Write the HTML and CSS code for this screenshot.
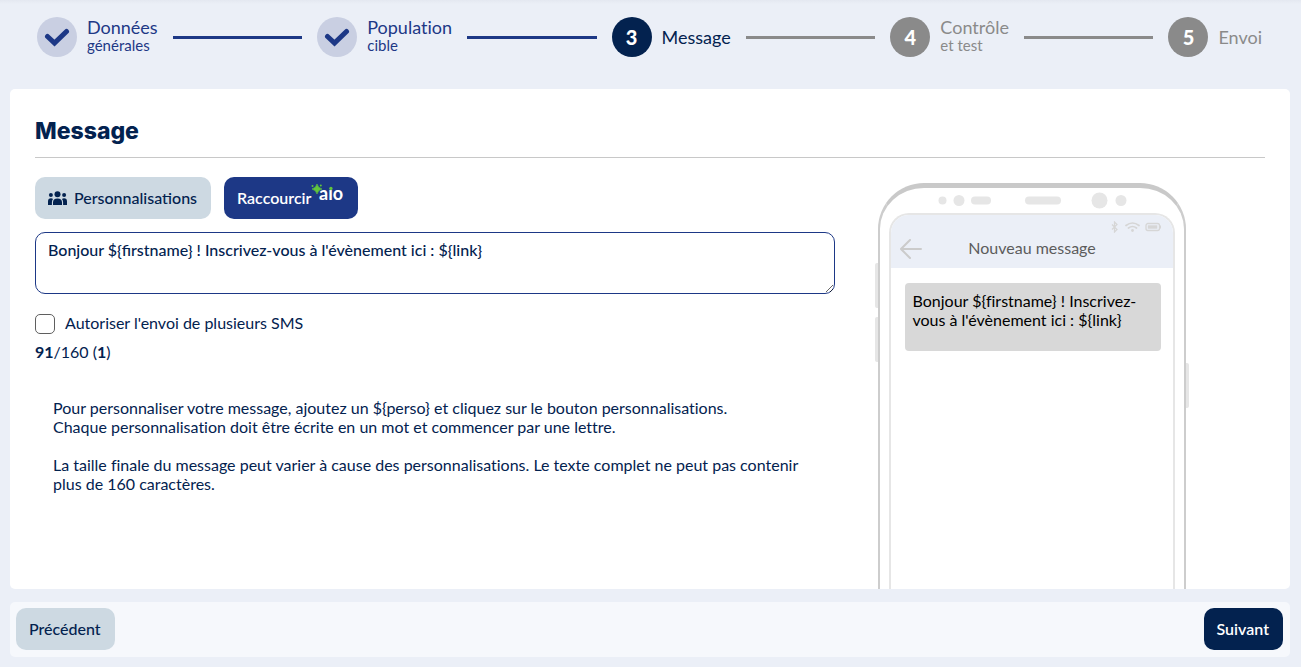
FILE: index.html
```html
<!DOCTYPE html>
<html lang="fr">
<head>
  <meta charset="UTF-8">
  <title>Message</title>
  <meta name="viewport" content="width=device-width, initial-scale=1.0">
  <link rel="stylesheet" href="styles.css">
</head>
<body>

<ol class="steps">
  <li class="step done">
    <span class="circle">
      <svg width="26" height="20" viewBox="0 0 26 20"><path d="M3.5 9.5l7 6.5L22.500 4.500" fill="none" stroke="currentColor" stroke-width="5" stroke-linecap="round" stroke-linejoin="miter"/></svg>
    </span>
    <span class="label">Données <small>générales</small></span>
  </li>
  <li class="line done"></li>
  <li class="step done">
    <span class="circle">
      <svg width="26" height="20" viewBox="0 0 26 20"><path d="M3.5 9.5l7 6.5L22.500 4.500" fill="none" stroke="currentColor" stroke-width="5" stroke-linecap="round" stroke-linejoin="miter"/></svg>
    </span>
    <span class="label">Population <small>cible</small></span>
  </li>
  <li class="line done"></li>
  <li class="step current">
    <span class="circle">3</span>
    <span class="label">Message</span>
  </li>
  <li class="line"></li>
  <li class="step">
    <span class="circle">4</span>
    <span class="label">Contrôle <small>et test</small></span>
  </li>
  <li class="line"></li>
  <li class="step">
    <span class="circle">5</span>
    <span class="label">Envoi</span>
  </li>
</ol>

<main class="card">
  <h1>Message</h1>
  <div class="columns">

    <form class="editor" id="smsForm">
      <div class="tools">
        <button type="button" class="btn btn-light">
          <svg width="19" height="14" viewBox="0 0 19 14" fill="currentColor">
            <circle cx="9.500" cy="3.200" r="3"/><circle cx="2.900" cy="4" r="2"/><circle cx="16.100" cy="4" r="2"/>
            <path d="M5 14v-2.500Q5 7.500 9.500 7.500T14 11.500V14zM0 14v-3.500Q0 7.300 3 7.300q1.200 0 2 .6Q3.900 9.300 3.900 11.500V14zM19 14v-3.500Q19 7.300 16 7.300q-1.200 0-2 .6 1.100 1.400 1.100 3.600V14z"/>
          </svg>
          <span>Personnalisations</span>
        </button>
        <button type="button" class="btn btn-blue">
          <span>Raccourcir</span>
          <svg class="aio" width="33" height="24" viewBox="0 0 33 24">
            <text x="8" y="18" class="aio-text">aio</text>
            <rect x="17" y="2" width="6" height="6" fill="#1d3886"/>
            <circle cx="19.900" cy="6.500" r="1.700" fill="#62c63c"/>
            <path d="M6 2Q7 6 11 7 7 8 6 12 5 8 1 7 5 6 6 2z" fill="#62c63c" stroke="#62c63c" stroke-width=".6"/>
            <circle cx="1.500" cy="4" r="1" fill="#62c63c"/><circle cx="9.800" cy="3.500" r="1" fill="#62c63c"/>
          </svg>
        </button>
      </div>
      <textarea name="message" aria-label="Message">Bonjour ${firstname} ! Inscrivez-vous à l'évènement ici : ${link}</textarea>
      <label class="check"><input type="checkbox" name="multiple"> <span>Autoriser l'envoi de plusieurs SMS</span></label>
      <p class="count"><b>91</b>/160 (<b>1</b>)</p>
      <div class="help">
        <p>Pour personnaliser votre message, ajoutez un ${perso} et cliquez sur le bouton personnalisations.<br>
        Chaque personnalisation doit être écrite en un mot et commencer par une lettre.</p>
        <p>La taille finale du message peut varier à cause des personnalisations. Le texte complet ne peut pas contenir plus de 160 caractères.</p>
      </div>
    </form>

    <div class="phone">
      <span class="key key-up"></span>
      <span class="key key-down"></span>
      <span class="key key-power"></span>
      <svg class="sensors" width="286" height="25" viewBox="0 0 286 25" fill="#e6e6e6">
        <circle cx="53.500" cy="12.500" r="4"/>
        <circle cx="70" cy="12.500" r="5.500"/>
        <rect x="82" y="8.500" width="20" height="8" rx="4"/>
        <rect x="136" y="8.500" width="36" height="8" rx="4"/>
        <circle cx="210.500" cy="12.500" r="8"/>
        <circle cx="232" cy="12.500" r="5.500"/>
      </svg>
      <div class="screen">
        <div class="topbar">
          <svg class="status" width="50" height="12" viewBox="0 0 50 12" fill="none" stroke="#d6d6d6">
            <path d="M1 3.500l5 5L3.500 11V1L6 3.500l-5 5" stroke-width="1.200"/>
            <path d="M15 4.500q6.500-5 13 0M17.500 7q4-3 8 0" stroke-width="1.700" stroke-linecap="round"/>
            <circle cx="21.500" cy="9.500" r="1.400" fill="#d6d6d6" stroke="none"/>
            <rect x="35" y="2.500" width="13.500" height="7" rx="2" stroke-width="1.300"/>
            <rect x="36.800" y="4.300" width="9.500" height="3.400" fill="#d6d6d6" stroke="none"/>
            <path d="M49.500 4.500v3"/>
          </svg>
          <div class="topbar-title">
            <svg class="back" width="22" height="20" viewBox="0 0 22 20" fill="none" stroke="#cbcbcb" stroke-width="2" stroke-linecap="round"><path d="M10 1L1 10l9 9M1 10h20"/></svg>
            <span>Nouveau message</span>
          </div>
        </div>
        <p class="bubble">Bonjour ${firstname} ! Inscrivez-vous à l'évènement ici : ${link}</p>
      </div>
    </div>

  </div>
</main>

<footer class="actions">
  <button type="button" class="btn btn-light"><span>Précédent</span></button>
  <button type="submit" form="smsForm" class="btn btn-navy"><span>Suivant</span></button>
</footer>

</body>
</html>
```
FILE: styles.css
```css
* { box-sizing: border-box; }
body {
  margin: 0; padding: 0 11px 10px 10px; min-height: 100vh;
  display: flex; flex-direction: column;
  font-family: Lato, sans-serif; font-size: 16px; line-height: 19px;
  font-variant-ligatures: none;
  background: linear-gradient(#e4e8f1, #ebeff7 4px) #ebeff7; color: #03224f;
}
p { margin: 0; }

.steps {
  display: flex; align-items: center; list-style: none;
  margin: 0; padding: 17px 28px 32px 27px;
}
.step { display: flex; align-items: center; gap: 10px; color: #8a8a8a; }
.step.done { color: #1d3886; }
.step.current { color: #03224f; }
.circle {
  width: 40px; height: 40px; border-radius: 50%;
  display: flex; align-items: center; justify-content: center;
  background: #8a8a8a; color: white; font-size: 20px; font-weight: 900;
}
.done .circle { background: #c9cfe2; color: #1d3886; }
.current .circle { background: #03224f; }
.label { font-size: 18px; line-height: 20px; }
.label small { display: block; padding-bottom: 4px; font-size: 15px; line-height: 16px; }
.line { flex: 1; height: 3px; margin: 0 15px; background: #8a8a8a; }
.line.done { background: #1d3886; }

.card {
  flex: 1; display: flex; flex-direction: column;
  padding: 24px 25px 0; background: white; border-radius: 5px;
}
h1 {
  margin: 0 0 19px; padding-bottom: 8px; border-bottom: 1px solid #c8c8c8;
  font-family: Inter, sans-serif; font-size: 23px; line-height: 36px; font-weight: 800;
}
.columns { flex: 1; display: grid; grid-template-columns: 65% 1fr; }

.tools { display: flex; gap: 13px; margin-bottom: 13px; }
.btn {
  display: flex; align-items: center; gap: 7px; height: 42px; padding: 0 14px 0 13px;
  border: 0; border-radius: 10px; cursor: pointer;
  font-family: inherit; font-size: 16px; font-weight: 500;
}
.btn span, .check span { padding-bottom: 2px; }
.btn-light { background: #cdd9e2; color: #03224f; }
.btn-blue { background: #1d3886; color: white; gap: 0; font-weight: 600; }
.btn-navy { background: #03224f; color: white; font-weight: 600; }
.aio { margin-bottom: 8px; }
.aio-text { font-size: 18px; font-weight: bold; fill: white; }

textarea {
  display: block; width: 100%; height: 62px; padding: 7px 12px;
  border: 1px solid #1d3886; border-radius: 10px; resize: vertical;
  font-family: inherit; font-size: 16px; line-height: 19px; font-weight: 500; color: #03224f;
}
.check { display: flex; align-items: center; gap: 10px; margin-top: 19px; }
.check input {
  appearance: none; width: 20px; height: 20px; margin: 0;
  border: 1px solid #5f5f5f; border-radius: 5px; background: white;
}
.check input:checked { background: #1d3886; }
.count { margin-top: 8px; }
.help { padding: 37px 18px; }
.help p + p { margin-top: 19px; }

.phone {
  position: relative; width: 308px; margin: 6px 0 0 43px; padding: 0 9px;
  display: flex; flex-direction: column;
  border: 2px solid #cdcdcd; border-top: 5px solid #c9c9c9; border-bottom: 0;
  border-radius: 46px 46px 0 0;
}
.key { position: absolute; width: 3px; height: 45px; background: #e6e6e6; border-radius: 2px 0 0 2px; }
.key-up { left: -5px; top: 75px; }
.key-down { left: -5px; top: 129px; }
.key-power { right: -5px; top: 175px; border-radius: 0 2px 2px 0; }
.sensors { display: block; }
.screen {
  flex: 1; overflow: hidden; border: 2px solid #e6e6e6; border-bottom: 0;
  border-radius: 20px 20px 0 0;
}
.topbar { height: 53px; padding: 6px 12px 0 9px; background: #ebeff7; color: #5c5c5c; }
.status { display: block; margin-left: auto; }
.topbar-title { display: flex; align-items: center; height: 32px; }
.topbar-title span { flex: 1; text-align: center; padding: 0 18px 3px 0; }
.bubble {
  min-height: 68px; margin: 15px 12px 0 14px; padding: 8px;
  background: #d8d8d8; border-radius: 4px; color: black;
}

.actions {
  display: flex; justify-content: space-between;
  margin-top: 13px; padding: 6px 7px 7px 6px; background: #f6f8fc; border-radius: 5px;
}
```
